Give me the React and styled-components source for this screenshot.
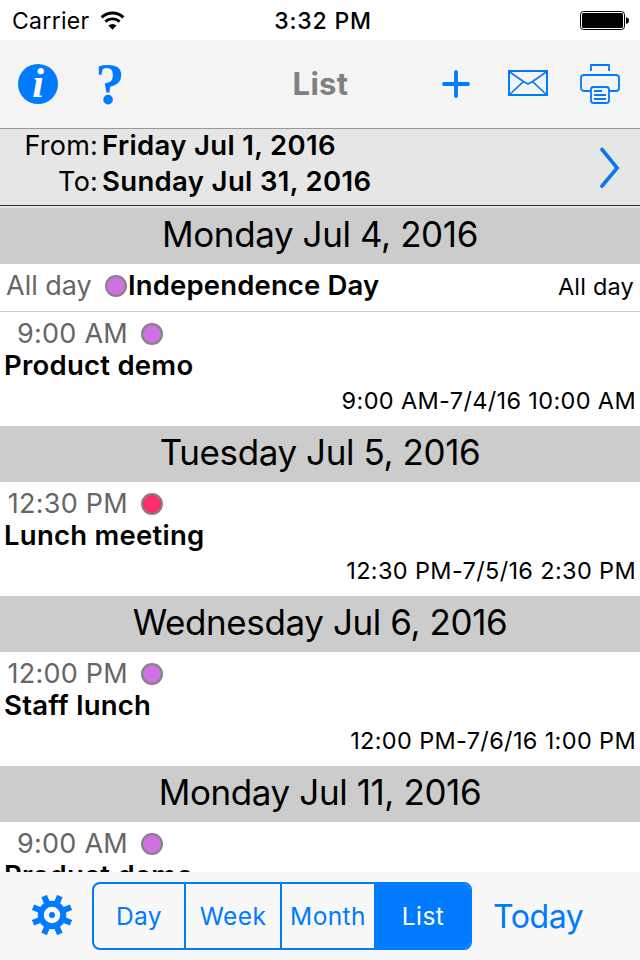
import styled, { createGlobalStyle } from "styled-components";

const days = [
  {
    title: "Monday Jul 4, 2016",
    events: [
      { time: "All day", name: "Independence Day", span: "All day", allDay: true },
      { time: "9:00 AM", name: "Product demo", span: "9:00 AM-7/4/16 10:00 AM" },
    ],
  },
  {
    title: "Tuesday Jul 5, 2016",
    events: [
      {
        time: "12:30 PM",
        name: "Lunch meeting",
        span: "12:30 PM-7/5/16 2:30 PM",
        color: "#ff2d68",
      },
    ],
  },
  {
    title: "Wednesday Jul 6, 2016",
    events: [
      { time: "12:00 PM", name: "Staff lunch", span: "12:00 PM-7/6/16 1:00 PM" },
    ],
  },
  {
    title: "Monday Jul 11, 2016",
    events: [{ time: "9:00 AM", name: "Product demo" }],
  },
];

const tabs = [
  { label: "Day", width: 92 },
  { label: "Week", width: 96 },
  { label: "Month", width: 94 },
  { label: "List", width: 94 },
];

const teeth = [22.5, 67.5, 112.5, 157.5, 202.5, 247.5, 292.5, 337.5];

export default function App() {
  return (
    <Screen>
      <GlobalStyle />
      <StatusBar>
        <Carrier>
          Carrier
          <WifiIcon />
        </Carrier>
        <Clock>3:32 PM</Clock>
        <StatusEnd>
          <BatteryIcon />
        </StatusEnd>
      </StatusBar>
      <NavBar>
        <NavGroup>
          <InfoButton>i</InfoButton>
          <HelpButton>?</HelpButton>
        </NavGroup>
        <NavTitle>List</NavTitle>
        <NavGroup $end>
          <PlusIcon />
          <MailIcon />
          <PrinterIcon />
        </NavGroup>
      </NavBar>
      <RangeBar>
        <RangeDates>
          <RangeLabel>From:</RangeLabel>
          <RangeValue>Friday Jul 1, 2016</RangeValue>
          <RangeLabel>To:</RangeLabel>
          <RangeValue>Sunday Jul 31, 2016</RangeValue>
        </RangeDates>
        <ChevronIcon />
      </RangeBar>
      <EventList>
        {days.map((day) => (
          <section key={day.title}>
            <DayHeader>{day.title}</DayHeader>
            {day.events.map((event) =>
              event.allDay ? (
                <AllDayRow key={event.name}>
                  <AllDayTime>{event.time}</AllDayTime>
                  <Dot />
                  <EventName>{event.name}</EventName>
                  <AllDaySpan>{event.span}</AllDaySpan>
                </AllDayRow>
              ) : (
                <EventRow key={event.name}>
                  <EventTop>
                    <EventTime>{event.time}</EventTime>
                    <Dot $color={event.color} />
                  </EventTop>
                  <EventName>{event.name}</EventName>
                  {event.span && <EventSpan>{event.span}</EventSpan>}
                </EventRow>
              )
            )}
          </section>
        ))}
      </EventList>
      <Toolbar>
        <GearIcon />
        <Tabs>
          {tabs.map((tab) => (
            <Tab key={tab.label} $width={tab.width} $selected={tab.label === "List"}>
              {tab.label}
            </Tab>
          ))}
        </Tabs>
        <TodayButton>Today</TodayButton>
      </Toolbar>
    </Screen>
  );
}

function WifiIcon() {
  return (
    <svg width="26" height="20" viewBox="0 0 26 20" fill="none" stroke="#000">
      <path d="M1.6 6.3a16 16 0 0 1 21.8 0" strokeWidth="3" />
      <path d="M5.4 10.8a10.3 10.3 0 0 1 14.2 0" strokeWidth="2.8" />
      <path d="M8.4 14.6a5.8 5.8 0 0 1 8.2 0l-4.1 4.2z" fill="#000" stroke="none" />
    </svg>
  );
}

function BatteryIcon() {
  return (
    <svg width="50" height="20" viewBox="0 0 50 20">
      <rect x="0.5" y="0.5" width="44" height="18" rx="3" fill="none" stroke="#000" />
      <rect x="2" y="2" width="41" height="15" rx="1.5" />
      <path d="M46 6.2c2 .3 3 1.4 3 3.3s-1 3-3 3.3z" />
    </svg>
  );
}

function PlusIcon() {
  return (
    <svg width="40" height="40" viewBox="0 0 40 40">
      <path
        d="M20 8v24M8 20h24"
        stroke="#007aff"
        strokeWidth="3.8"
        strokeLinecap="round"
      />
    </svg>
  );
}

function MailIcon() {
  return (
    <svg width="40" height="40" viewBox="0 0 40 40" fill="none" stroke="#007aff">
      <rect x="1" y="7" width="38" height="24" strokeWidth="2" />
      <path d="M1 7.5l14.8 10.2 4.2 2.3 4.2-2.3L39 7.5" strokeWidth="1.6" />
      <path d="M1 31l14.5-13.3M39 31L24.5 17.7" strokeWidth="1.6" />
    </svg>
  );
}

function PrinterIcon() {
  return (
    <svg
      width="40"
      height="40"
      viewBox="0 0 40 40"
      fill="none"
      stroke="#007aff"
      strokeWidth="1.8"
    >
      <path d="M11 7V1h18v6" />
      <path d="M11 27H4a3 3 0 0 1-3-3V14a3 3 0 0 1 3-3h32a3 3 0 0 1 3 3v10a3 3 0 0 1-3 3h-7" />
      <rect x="11" y="23" width="18" height="16" rx="2.5" />
      <path d="M14 27h8M14 31h12M14 35h12" />
    </svg>
  );
}

function ChevronIcon() {
  return (
    <svg width="20" height="42" viewBox="0 0 20 42" fill="none">
      <path
        d="M2 3.5L17.2 22 2 40"
        stroke="#0a78e8"
        strokeWidth="3.6"
        strokeLinecap="round"
      />
    </svg>
  );
}

function GearIcon() {
  return (
    <svg width="40" height="40" viewBox="-20 -20 40 40" fill="#007aff">
      {teeth.map((angle) => (
        <rect
          key={angle}
          x="-3"
          y="-20.5"
          width="6"
          height="8"
          transform={`rotate(${angle})`}
        />
      ))}
      <circle r="11.3" fill="none" stroke="#007aff" strokeWidth="6" />
      <circle r="3" />
    </svg>
  );
}

const GlobalStyle = createGlobalStyle`
  * {
    box-sizing: border-box;
  }
  body {
    margin: 0;
    background-color: #ffffff;
  }
  svg {
    display: block;
    flex-shrink: 0;
  }
`;

const Screen = styled.div`
  display: flex;
  flex-direction: column;
  width: 640px;
  height: 960px;
  overflow: hidden;
  background-color: #ffffff;
  color: #000000;
  font-family: Inter, "Liberation Sans", sans-serif;
  font-size: 27px;
  white-space: nowrap;
`;

const StatusBar = styled.div`
  display: grid;
  grid-template-columns: 1fr auto 1fr;
  align-items: center;
  height: 40px;
  flex-shrink: 0;
  padding: 1px 10px 0 12px;
  font-size: 23px;
`;

const Carrier = styled.div`
  display: flex;
  align-items: center;
  gap: 10px;
  letter-spacing: 0.3px;
`;

const Clock = styled.div`
  padding-left: 4px;
  font-weight: 500;
  letter-spacing: 0.8px;
`;

const StatusEnd = styled.div`
  display: flex;
  justify-content: flex-end;
`;

const NavBar = styled.div`
  display: grid;
  grid-template-columns: 1fr auto 1fr;
  align-items: center;
  height: 89px;
  flex-shrink: 0;
  padding: 0 20px 0 18px;
  background-color: #f4f4f4;
  border-bottom: 1px solid #999999;
`;

const NavGroup = styled.div`
  display: flex;
  align-items: center;
  justify-content: ${(props) => (props.$end ? "flex-end" : "flex-start")};
  gap: 32px;
`;

const NavTitle = styled.div`
  padding-left: 3px;
  color: #808080;
  font-size: 31px;
  font-weight: 700;
  letter-spacing: 0.3px;
  line-height: 38px;
`;

const InfoButton = styled.div`
  width: 40px;
  height: 40px;
  border-radius: 50%;
  background-color: #007aff;
  color: #ffffff;
  font: italic bold 42px/38px "Liberation Serif", serif;
  text-align: center;
`;

const HelpButton = styled.div`
  width: 40px;
  height: 40px;
  color: #007aff;
  font: bold 59px/40px "Liberation Serif", serif;
  text-align: center;
`;

const RangeBar = styled.div`
  display: flex;
  align-items: center;
  justify-content: space-between;
  height: 77px;
  flex-shrink: 0;
  padding-right: 20px;
  background-color: #e6e6e6;
  border-bottom: 1px solid #333333;
`;

const RangeDates = styled.div`
  display: grid;
  grid-template-columns: 98px auto;
  column-gap: 4px;
  align-self: flex-start;
  line-height: 36px;
  margin-top: -1px;
`;

const RangeLabel = styled.div`
  text-align: right;
  letter-spacing: 0.2px;
`;

const RangeValue = styled.div`
  margin-top: -1px;
  font-size: 27.5px;
  font-weight: 600;
  letter-spacing: 0.35px;
`;

const EventList = styled.div`
  flex: 1;
  min-height: 0;
  overflow: hidden;
  border-top: 2px solid #e6e6e6;
`;

const DayHeader = styled.div`
  height: 56px;
  background-color: #cccccc;
  font-size: 35px;
  line-height: 52px;
  letter-spacing: -0.4px;
  text-align: center;
`;

const AllDayRow = styled.div`
  display: flex;
  align-items: center;
  height: 48px;
  padding: 0 6px 4px 0;
  border-bottom: 1px solid #cccccc;
`;

const AllDayTime = styled.div`
  width: 105px;
  padding-left: 6px;
  color: #666666;
`;

const AllDaySpan = styled.div`
  margin-left: auto;
  padding-top: 2px;
  font-size: 23.5px;
  letter-spacing: 0.2px;
`;

const EventRow = styled.div`
  height: 114px;
  padding-top: 6px;
`;

const EventTop = styled.div`
  display: flex;
  align-items: center;
  height: 32px;
`;

const EventTime = styled.div`
  width: 128px;
  margin-right: 13px;
  padding-bottom: 1px;
  color: #666666;
  letter-spacing: 0.25px;
  text-align: right;
`;

const Dot = styled.div`
  width: 22px;
  height: 22px;
  border: 2px solid #887d8a;
  border-radius: 50%;
  background-color: ${(props) => props.$color || "#cc73e1"};
`;

const EventName = styled.div`
  margin-top: -1px;
  padding-left: 1px;
  font-size: 27.5px;
  font-weight: 600;
  letter-spacing: 0.15px;
  line-height: 32px;

  ${AllDayRow} & {
    margin-top: -2px;
  }

  ${EventRow} & {
    padding-left: 4px;
    letter-spacing: 0.25px;
  }
`;

const EventSpan = styled.div`
  padding-right: 4px;
  font-size: 23.5px;
  letter-spacing: 0.35px;
  line-height: 39px;
  text-align: right;
`;

const Toolbar = styled.div`
  display: flex;
  align-items: center;
  height: 88px;
  flex-shrink: 0;
  padding: 0 0 2px 32px;
  background-color: #f8f8f8;
  color: #007aff;
`;

const Tabs = styled.div`
  display: flex;
  width: 380px;
  height: 68px;
  margin: 2px 0 0 20px;
  border: 2px solid #007aff;
  border-radius: 8px;
  overflow: hidden;
`;

const Tab = styled.div`
  display: flex;
  align-items: center;
  justify-content: center;
  width: ${(props) => props.$width}px;
  background-color: ${(props) => (props.$selected ? "#007aff" : "transparent")};
  color: ${(props) => (props.$selected ? "#ffffff" : "#007aff")};
  font-size: 24.5px;
  letter-spacing: 0.4px;

  &:not(:last-child) {
    border-right: 2px solid #007aff;
  }
`;

const TodayButton = styled.div`
  margin-left: 21px;
  padding-top: 2px;
  font-size: 32px;
  letter-spacing: -0.4px;
`;
